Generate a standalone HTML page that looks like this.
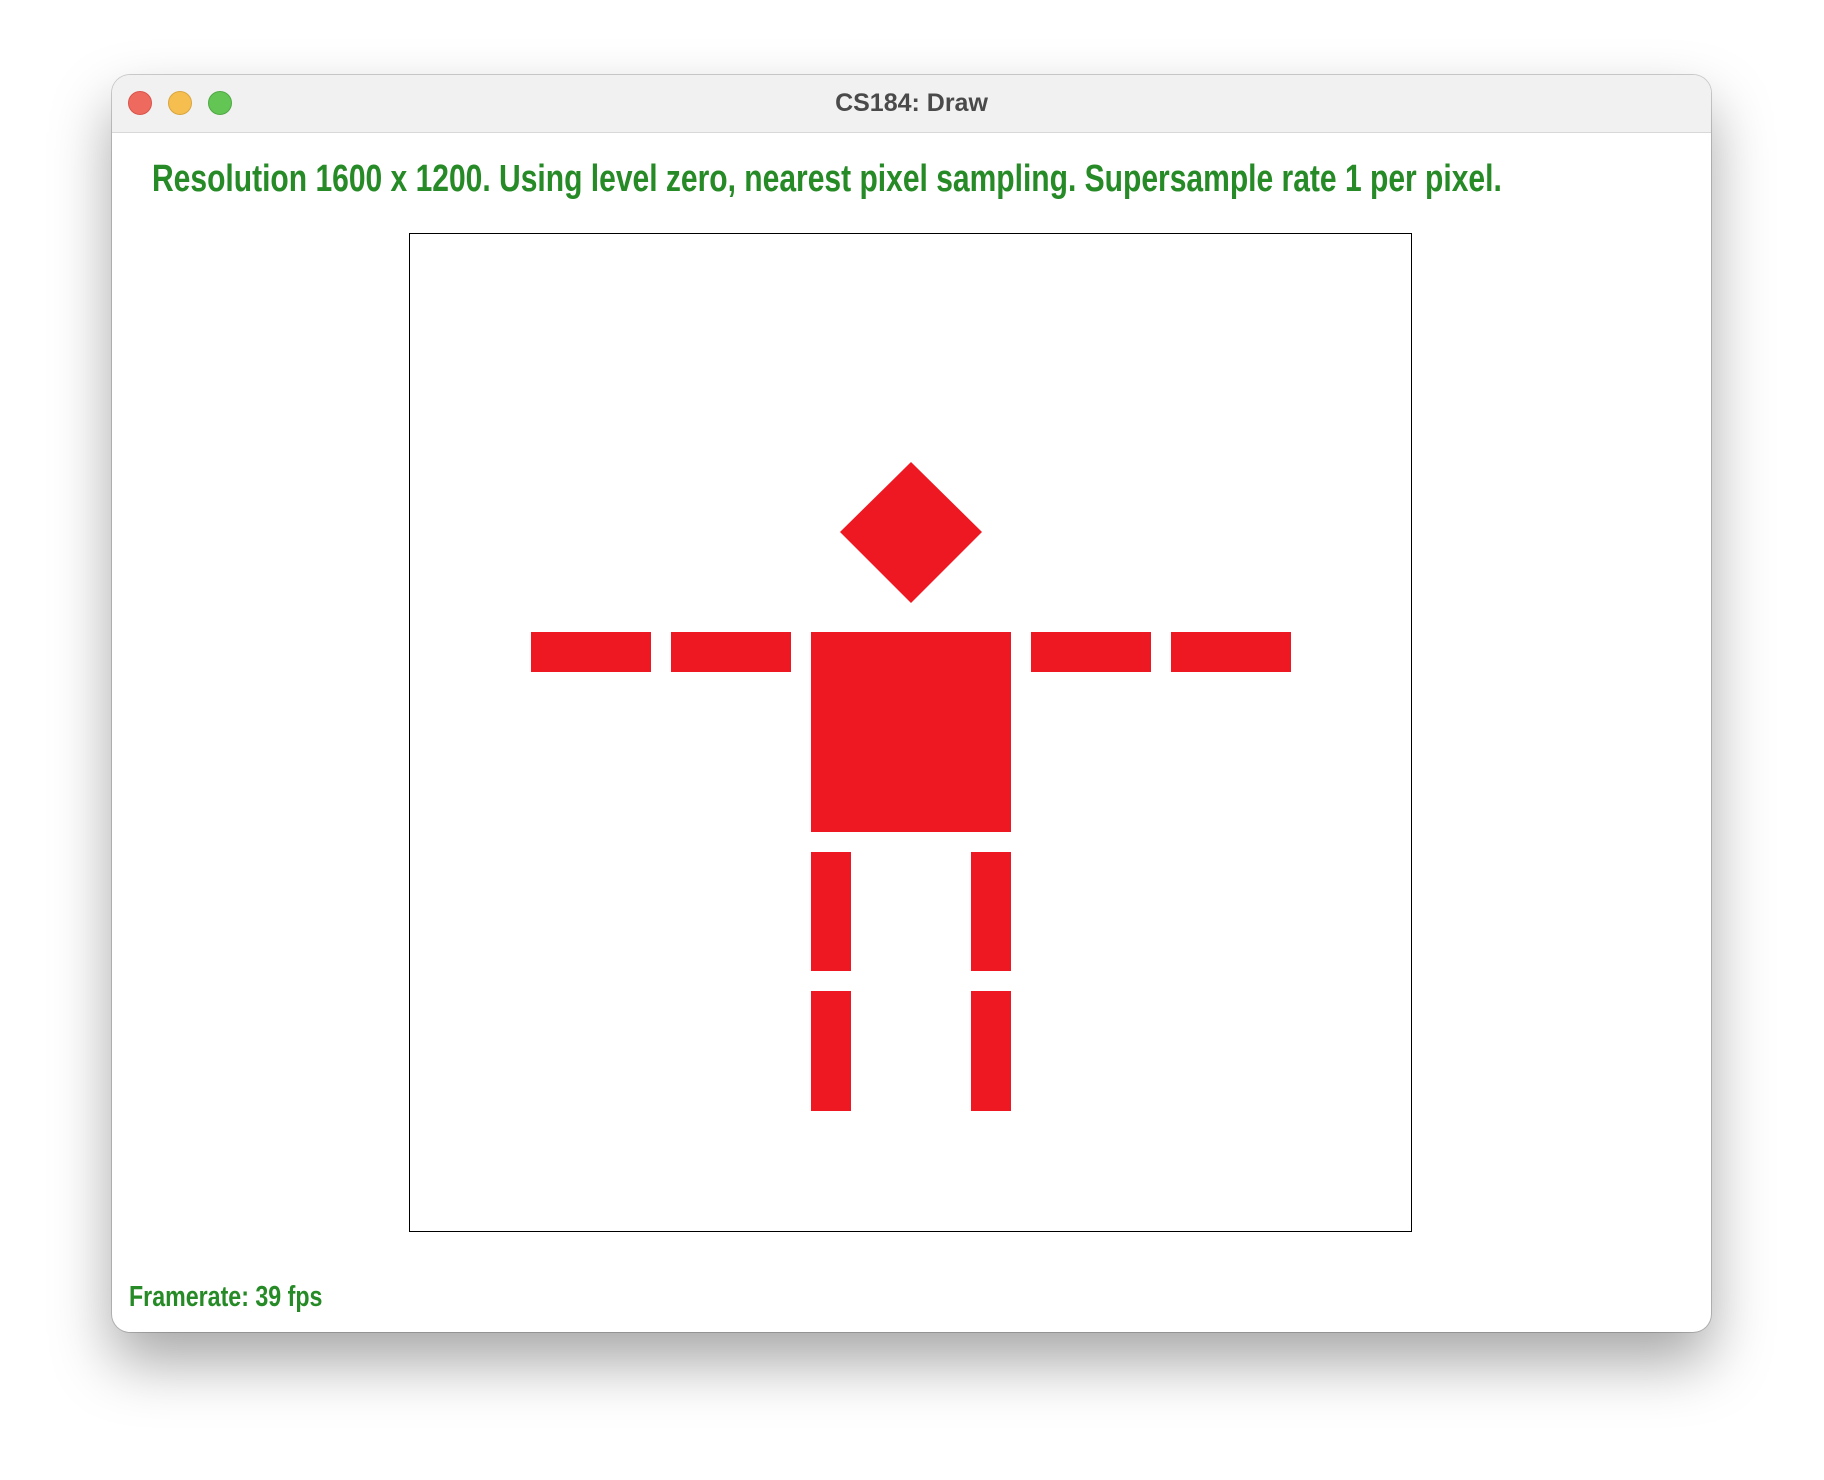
<!DOCTYPE html>
<html><head><style>
html,body{margin:0;padding:0;width:1824px;height:1480px;background:#fff;overflow:hidden;position:relative}
.win{position:absolute;left:112px;top:75px;width:1599px;height:1257px;border-radius:18px;background:#fff;box-shadow:0 30px 60px rgba(0,0,0,0.35),0 0 0 1px rgba(0,0,0,0.18);overflow:hidden}
.tb{position:absolute;left:0;top:0;width:100%;height:57px;background:#f1f1f1;border-bottom:1px solid #d8d8d8}
.dot{position:absolute;top:16px;width:24px;height:24px;border-radius:50%}
.title{position:absolute;left:0;right:0;top:14px;text-align:center;font:bold 25px "Liberation Sans",sans-serif;color:#4a4a4a}
.g{position:absolute;font-family:"Liberation Sans",sans-serif;font-weight:bold;color:#268a26;white-space:nowrap;transform-origin:0 0}
.r{position:absolute;background:#ee1822}
</style></head><body>
<div class="win">
 <div class="tb">
  <div class="dot" style="left:16px;background:#ee6a5f;border:1px solid #d9534a;width:22px;height:22px"></div>
  <div class="dot" style="left:56px;background:#f5be4f;border:1px solid #d9a53e;width:22px;height:22px"></div>
  <div class="dot" style="left:96px;background:#62c554;border:1px solid #50a844;width:22px;height:22px"></div>
  <div class="title">CS184: Draw</div>
 </div>
 <div class="g" style="left:40px;top:83px;font-size:38px;transform:scaleX(0.79)">Resolution 1600 x 1200. Using level zero, nearest pixel sampling. Supersample rate 1 per pixel.</div>
 <div class="g" style="left:17px;top:1206px;font-size:29px;transform:scaleX(0.8)">Framerate: 39 fps</div>
</div>
<div style="position:absolute;left:409px;top:233px;width:1001px;height:997px;border:1px solid #000"></div>
<svg style="position:absolute;left:0;top:0" width="1824" height="1480"><polygon points="911,462 982,532 911,603 840,532" fill="#ee1822"/></svg>
<div class="r" style="left:531px;top:632px;width:120px;height:40px"></div>
<div class="r" style="left:671px;top:632px;width:120px;height:40px"></div>
<div class="r" style="left:811px;top:632px;width:200px;height:200px"></div>
<div class="r" style="left:1031px;top:632px;width:120px;height:40px"></div>
<div class="r" style="left:1171px;top:632px;width:120px;height:40px"></div>
<div class="r" style="left:811px;top:852px;width:40px;height:119px"></div>
<div class="r" style="left:971px;top:852px;width:40px;height:119px"></div>
<div class="r" style="left:811px;top:991px;width:40px;height:120px"></div>
<div class="r" style="left:971px;top:991px;width:40px;height:120px"></div>
</body></html>
